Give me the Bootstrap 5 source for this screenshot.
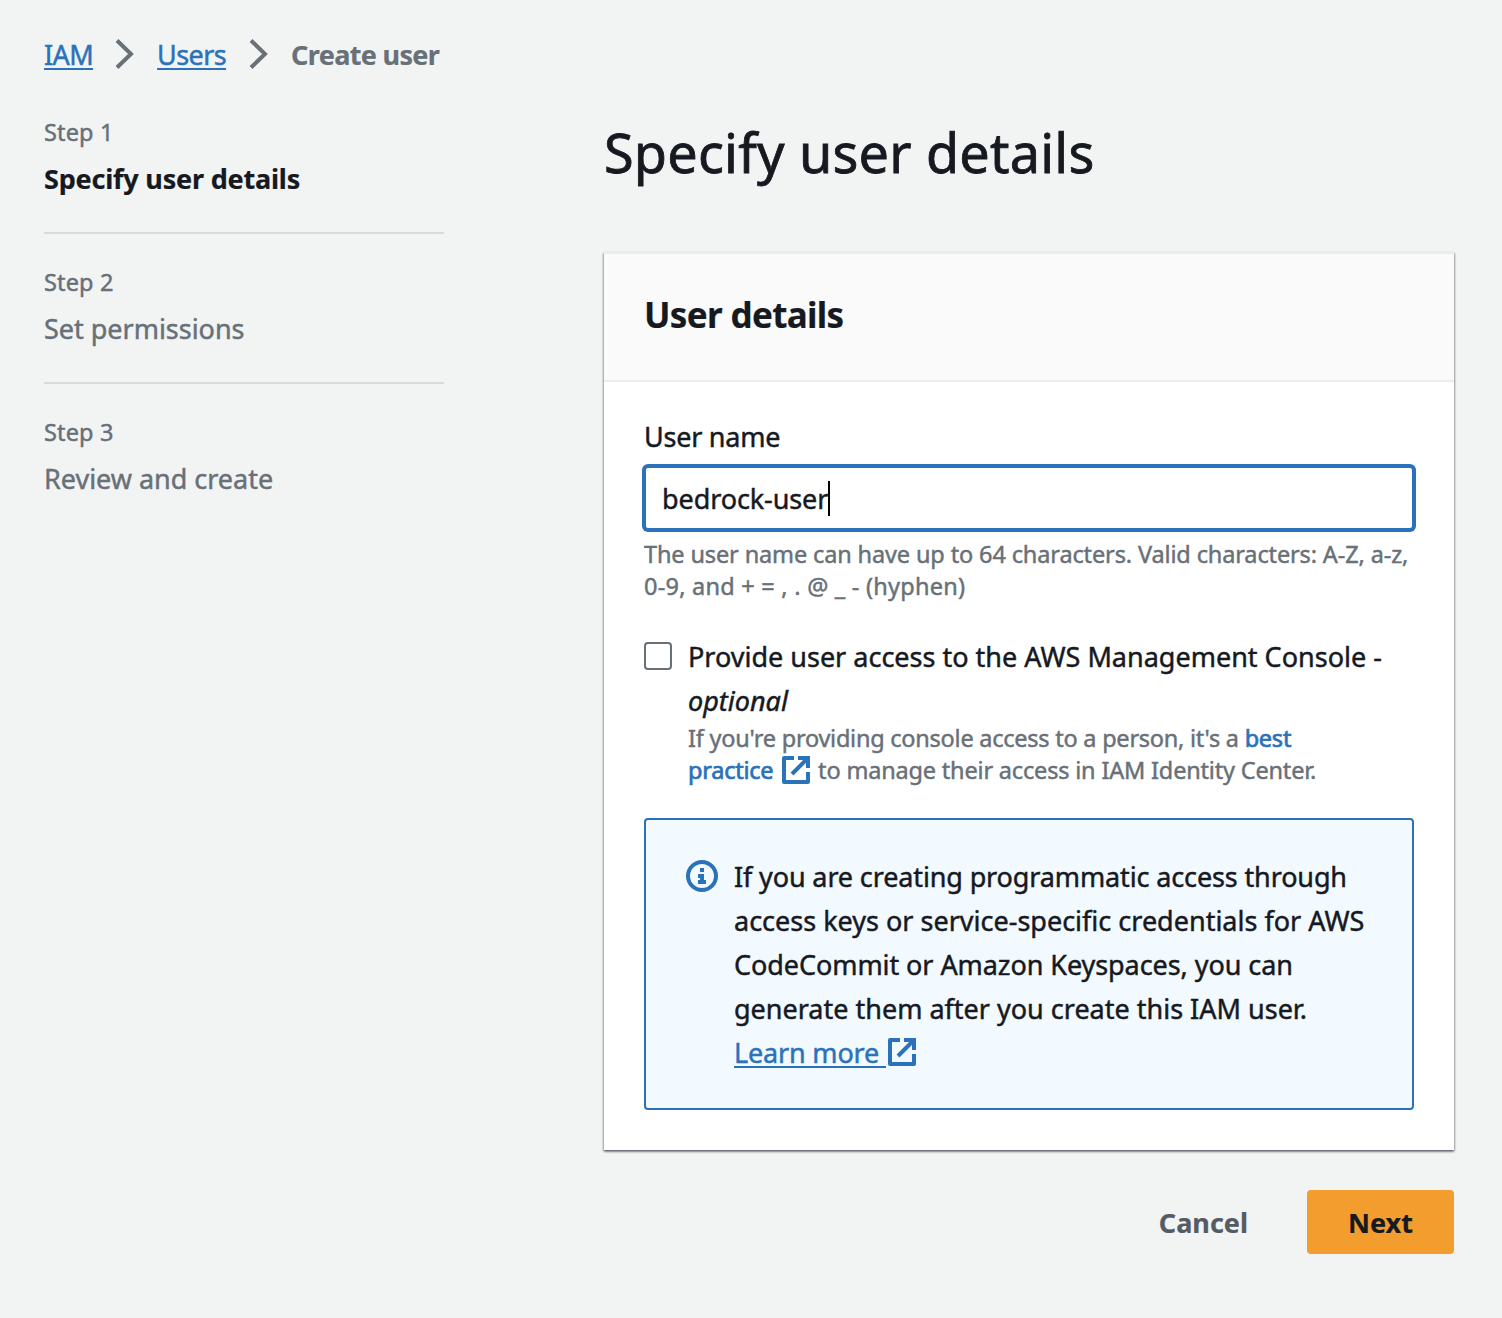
<!DOCTYPE html>
<html lang="en">
<head>
<meta charset="utf-8">
<meta name="viewport" content="width=device-width, initial-scale=1">
<title>Create user | IAM</title>
<link rel="stylesheet" href="https://cdn.jsdelivr.net/npm/bootstrap@5.3.0/dist/css/bootstrap.min.css">
<style>
  :root { --ink: #16191f; --muted: #687078; --link: #2a72b9; }
  body {
    font-family: "Noto Sans", "Open Sans", sans-serif;
    font-size: 27px; line-height: 44px; color: var(--ink);
    background: #f2f4f4; -webkit-text-stroke: .45px;
  }
  svg { display: block; fill: none; flex: none; }
  a { color: var(--link); }
  b, strong, .fw-bold { -webkit-text-stroke: .2px; }
  .page { padding: 33px 48px 0 44px; }
  .underlined { text-decoration-thickness: 2px; text-underline-offset: 3px; letter-spacing: -.6px; }
  .crumbs { height: 44px; margin-bottom: 39px; color: var(--muted); }
  .crumbs svg { margin-top: -2px; }
  .crumb-current { letter-spacing: -.65px; }
  .chev-a { margin: 0 22px 0 22px; }
  .chev-b { margin: 0 22px 0 23px; }
  .steps { width: 400px; margin-right: 160px; color: var(--muted); }
  .step + .step { border-top: 2px solid #d5dbdb; margin-top: 31px; padding-top: 32px; }
  .step-label { font-size: 23.5px; line-height: 32px; margin-bottom: 9px; letter-spacing: .15px; }
  .step-title { letter-spacing: -.02px; }
  .step-title.fw-bold { color: var(--ink); letter-spacing: -.2px; }
  .page-title { font-size: 54px; line-height: 72px; font-weight: 400; margin: 0 0 64px; letter-spacing: .2px; -webkit-text-stroke: .8px; }
  .panel { border: 0; border-radius: 0; background: #fff; color: var(--ink);
    box-shadow: 0 2px 2px rgba(0,7,22,.35), 1px 1px 2px rgba(0,7,22,.25), -1px 1px 2px rgba(0,7,22,.25); }
  .panel-head { background: #fafafa; border-top: 2px solid #eaeded; border-bottom: 2px solid #eaeded;
    height: 130px; padding: 39px 40px 0; }
  .panel-head h2 { font-size: 35px; line-height: 44px; margin: 0; letter-spacing: -.65px; }
  .panel-body { padding: 33px 40px 40px; }
  .name-label { margin-bottom: 7px; letter-spacing: -.25px; }
  .name-box { height: 64px; padding: 1px 16px 0; border: 2px solid var(--link); border-radius: 4px;
    box-shadow: 0 0 0 2px var(--link); font-size: 27px; line-height: 44px; letter-spacing: -.1px; color: var(--ink); background: #fff; }
  .caret { width: 2px; height: 35px; background: #000; margin-top: -1px; }
  .hint { font-size: 23.5px; line-height: 32px; color: var(--muted); letter-spacing: -.13px; }
  .hint-wide { letter-spacing: .24px; }
  .hint-tight { letter-spacing: -.24px; margin-top: -1px; }
  .hint-tail { letter-spacing: -.18px; }
  .hint a { -webkit-text-stroke: .7px; text-decoration: none; }
  .name-hint { margin: 8px 0 33px; }
  .tick { width: 28px; height: 28px; margin: 7px 16px 0 0; border: 2px solid var(--muted); border-radius: 4px; flex: none; }
  .ext { display: inline-block; vertical-align: 3px; margin: -6px 0 -6px 2px; }
  .hint .ext { margin: -6px 2px -6px 3px; vertical-align: 1px; }
  .notice { margin: 32px 0 0; padding: 35px 40px 33px; border: 2px solid var(--link); border-radius: 4px; background: #f2f9ff; color: var(--ink); }
  .notice svg.info { margin: 5px 16px 0 0; }
  .notice-first { letter-spacing: -.13px; }
  .notice-third { letter-spacing: -.07px; }
  .learn { letter-spacing: -.17px; text-decoration-thickness: 2px; text-underline-offset: 3px; }
  .actions { margin-top: 40px; }
  .act { font-size: 27px; line-height: 44px; font-weight: 700; height: 64px; padding: 11px 41px 9px; border: 0; border-radius: 4px; -webkit-text-stroke: .2px; }
  .act-cancel { color: #545b64; padding-right: 59px; }
  .act-next, .act-next:hover { background: #f29d2e; color: var(--ink); width: 147px; }
</style>
<script src="https://cdn.jsdelivr.net/npm/bootstrap@5.3.0/dist/js/bootstrap.bundle.min.js"></script>
</head>
<body>
<svg width="0" height="0" class="position-absolute" aria-hidden="true">
  <symbol id="external" viewBox="0 0 28 28">
    <path d="M12 2H2v24h24V16M16 2h10v10M26 2 10 18" fill="none" stroke="#2a72b9" stroke-width="4" stroke-linejoin="round"/>
    <path d="M24 0h4v4h-4z" fill="#2a72b9"/>
  </symbol>
  <symbol id="chevron" viewBox="0 0 20 32">
    <path d="M2 2.500 16 16 2 29.500" fill="none" stroke="#687078" stroke-width="4"/>
  </symbol>
</svg>
<div class="page">
  <nav class="crumbs d-flex align-items-center" aria-label="breadcrumb">
    <a class="underlined" href="#">IAM</a>
    <svg class="chev-a" width="20" height="32"><use href="#chevron"/></svg>
    <a class="underlined" href="#">Users</a>
    <svg class="chev-b" width="20" height="32"><use href="#chevron"/></svg>
    <span class="crumb-current fw-bold">Create user</span>
  </nav>
  <div class="d-flex align-items-start">
    <aside class="steps flex-shrink-0">
      <div class="step"><div class="step-label">Step 1</div><div class="step-title fw-bold">Specify user details</div></div>
      <div class="step"><div class="step-label">Step 2</div><div class="step-title">Set permissions</div></div>
      <div class="step"><div class="step-label">Step 3</div><div class="step-title">Review and create</div></div>
    </aside>
    <main class="flex-grow-1">
      <h1 class="page-title">Specify user details</h1>
      <section class="card panel">
        <div class="panel-head"><h2 class="fw-bold">User details</h2></div>
        <div class="panel-body">
          <div class="name-label">User name</div>
          <div class="form-control name-box d-flex align-items-center" role="textbox" aria-label="User name">bedrock-user<span class="caret"></span></div>
          <div class="hint name-hint text-nowrap">The user name can have up to 64 characters. Valid characters: A-Z, a-z,<br><span class="hint-wide">0-9, and + = , . @ _ - (hyphen)</span></div>
          <div class="d-flex">
            <span class="tick" role="checkbox" aria-checked="false"></span>
            <div class="text-nowrap">
              <div>Provide user access to the AWS Management Console -<br><em>optional</em></div>
              <div class="hint hint-tight">If you're providing console access to a person, it's a <a href="#">best<br>practice <svg class="ext" width="28" height="28"><use href="#external"/></svg></a><span class="hint-tail"> to manage their access in IAM Identity Center.</span></div>
            </div>
          </div>
          <div class="alert notice d-flex text-nowrap">
            <svg class="info" width="32" height="32" viewBox="0 0 32 32"><circle cx="16" cy="16" r="14" stroke="#2a72b9" stroke-width="4"/><path fill="#2a72b9" d="M14 8h4v4h-4zM12 14h6v6h2v4h-8v-4h2v-2h-2z"/></svg>
            <div><span class="notice-first">If you are creating programmatic access through</span><br>access keys or service-specific credentials for AWS<br><span class="notice-third">CodeCommit or Amazon Keyspaces, you can</span><br>generate them after you create this IAM user.<br><a class="learn" href="#">Learn more <svg class="ext" width="28" height="28"><use href="#external"/></svg></a></div>
          </div>
        </div>
      </section>
      <div class="actions d-flex justify-content-end">
        <button type="button" class="btn act act-cancel">Cancel</button>
        <button type="button" class="btn act act-next">Next</button>
      </div>
    </main>
  </div>
</div>
</body>
</html>
